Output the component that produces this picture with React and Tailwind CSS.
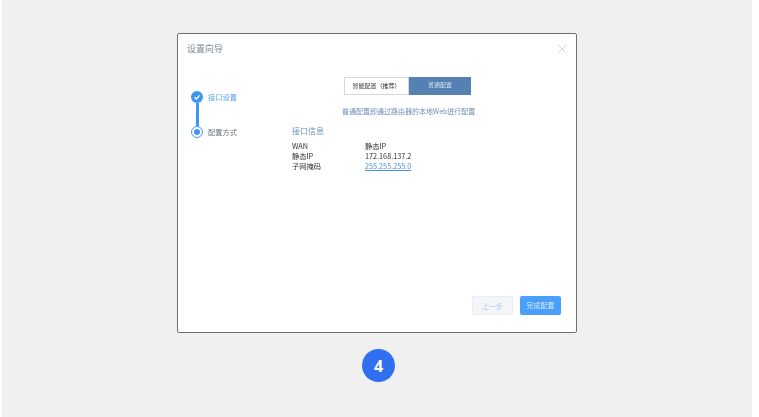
import { X } from 'lucide-react';

const info = [
  ['WAN', '静态IP'],
  ['静态IP', '172.168.137.2'],
  ['子网掩码', '255.255.255.0'],
];

function Steps() {
  return (
    <div className="w-[105px] pl-[13px] pt-[28px] text-[7.25px] leading-[10px]">
      <div className="flex items-center gap-[5px] h-[12px]">
        <div className="w-[12px] h-[12px] rounded-full bg-[#3f97f5] flex items-center justify-center">
          <svg width="8" height="8" viewBox="0 0 8 8" fill="none">
            <path d="M1.5 4.2 L3.4 6 L6.6 2.4" stroke="white" strokeWidth="1.4" />
          </svg>
        </div>
        <span className="text-[#5aa5ee]">接口设置</span>
      </div>
      <div className="ml-[4.5px] w-[3px] h-[23px] bg-[#3f97f5]" />
      <div className="flex items-center gap-[5px] h-[12px]">
        <div className="w-[12px] h-[12px] rounded-full border-[1.5px] border-[#3f97f5] flex items-center justify-center bg-white">
          <div className="w-[6px] h-[6px] rounded-full bg-[#3f97f5]" />
        </div>
        <span className="text-[#6d7580]">配置方式</span>
      </div>
    </div>
  );
}

function Content() {
  return (
    <div className="flex-1 text-[7.25px] pt-[14px]">
      <div className="flex ml-[61px] w-[127px] h-[18px] text-[6px] leading-[16px] text-center">
        <div className="w-[65px] border border-[#d8d8d8] bg-white text-[#333]">智能配置（推荐）</div>
        <div className="w-[62px] bg-[#5480b4] text-[#dfe8f2]">普通配置</div>
      </div>
      <p className="mt-[11px] ml-[59px] text-[7px] leading-[10px] text-[#6f8fb5]">
        普通配置即通过路由器的本地Web进行配置
      </p>
      <h3 className="mt-[9px] ml-[9px] text-[8px] leading-[12px] font-normal text-[#6b93c4]">接口信息</h3>
      <div className="mt-[4px] ml-[9px] leading-[10px] text-[#333]">
        {info.map(([k, v]) => (
          <div key={k} className="flex">
            <span className="w-[73px]">{k}</span>
            <span className={k === '子网掩码' ? 'text-[#4a8fe0] underline' : ''}>{v}</span>
          </div>
        ))}
      </div>
    </div>
  );
}

export default function App() {
  return (
    <div
      className="bg-white w-[759px] h-[417px] overflow-hidden pl-[2px]"
      style={{ fontFamily: '"Noto Sans CJK SC", "Noto Sans", sans-serif' }}
    >
      <div className="w-[750px] h-[417px] bg-[#f0f0f0] pt-[33px] flex flex-col items-center">
        <div className="w-[400px] h-[300px] bg-white border-[1.5px] border-[#6e6e74] rounded-[2px] flex flex-col blur-[0.3px]">
          <div className="flex items-center justify-between h-[28px] mt-[1px] pl-[9px] pr-[6px]">
            <span className="text-[9px] text-[#7c8794]">设置向导</span>
            <X size={16} strokeWidth={1.1} color="#c4c7cb" />
          </div>
          <div className="flex flex-1">
            <Steps />
            <Content />
          </div>
          <div className="flex justify-end gap-[7px] pr-[15px] pb-[17px] text-[7px] leading-[18px] text-center">
            <div className="w-[41px] h-[19px] rounded-[2px] bg-[#f4f5f8] border border-[#ebecf0] text-[#a5c8f0]">上一步</div>
            <div className="w-[41px] h-[19px] rounded-[2px] bg-[#4a9ffa] text-[#d5e9fd]">完成配置</div>
          </div>
        </div>
        <div
          className="mt-[16px] ml-[3px] w-[33px] h-[33px] rounded-full bg-[#2f6ff0] text-white flex items-center justify-center text-[16px] font-bold"
          style={{ fontFamily: '"Noto Sans", sans-serif' }}
        >
          4
        </div>
      </div>
    </div>
  );
}
